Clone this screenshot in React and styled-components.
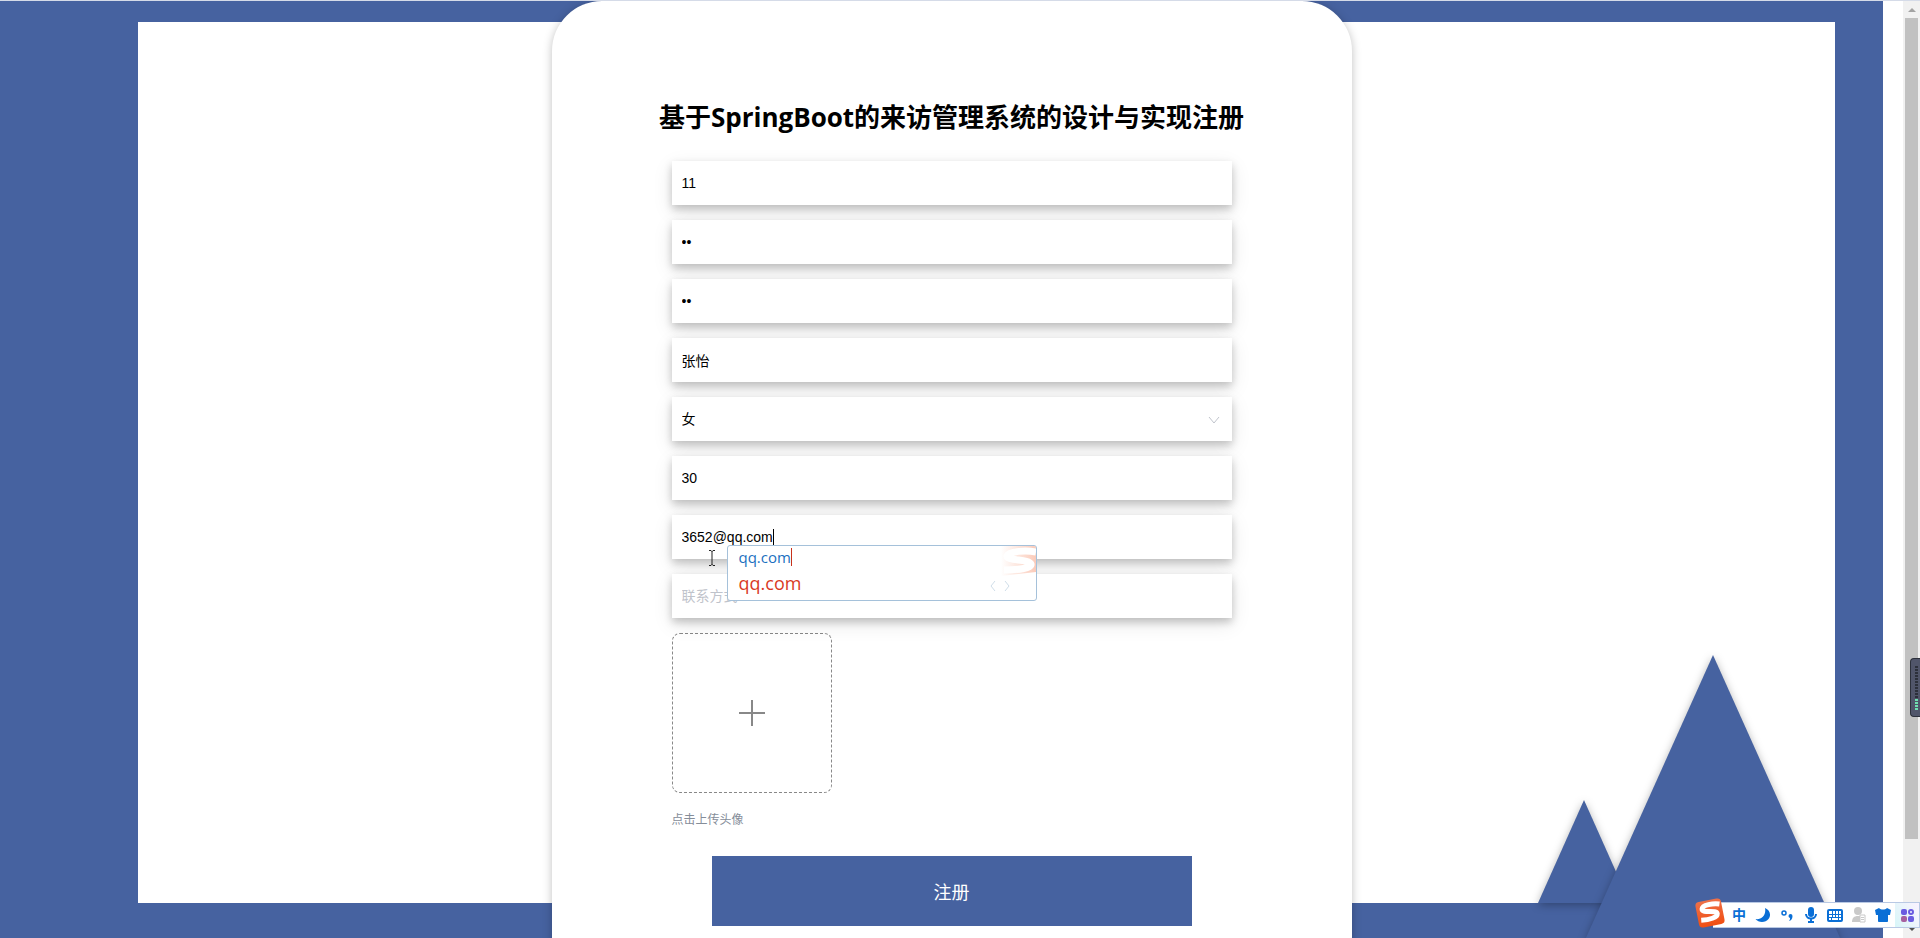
/* eslint-disable react/prop-types */
import React from 'react';
import styled, { createGlobalStyle } from 'styled-components';

const fields = [
  { name: 'account', label: '账号', value: '11' },
  { name: 'password', label: '密码', value: '11', type: 'password' },
  { name: 'confirm', label: '确认密码', value: '11', type: 'password' },
  { name: 'realname', label: '姓名', value: '张怡' },
  { name: 'gender', label: '性别', value: '女', options: ['女', '男'] },
  { name: 'age', label: '年龄', value: '30' },
  { name: 'email', label: '邮箱', value: '3652@qq.com', active: true },
  { name: 'phone', label: '联系方式', placeholder: '联系方式' },
];

const Mountains = () => (
  <MountainArt viewBox="0 0 302 283" aria-hidden="true">
    <polygon points="46,145 92,248 0,248" />
    <polygon points="175,0 303,285 47,285" />
  </MountainArt>
);

const SogouLogo = () => (
  <svg width="34" height="34" viewBox="0 0 34 34" aria-hidden="true">
    <defs>
      <linearGradient id="sogou" x1="0" y1="0" x2="0" y2="1">
        <stop offset="0" stopColor="#ee7048" />
        <stop offset="1" stopColor="#f04e12" />
      </linearGradient>
    </defs>
    <g transform="rotate(-11 17 17)">
      <rect x="4" y="4" width="26" height="26" rx="4" fill="url(#sogou)" />
      <path
        d="M28 10c-6-2-17-2.500-18 1.500-1 5 14 3 14 7.500-.5 4-9 4.500-17 3.500"
        fill="none"
        stroke="#fff"
        strokeWidth="5"
      />
    </g>
  </svg>
);

const Candidates = () => (
  <Popup>
    <Watermark viewBox="0 0 44 30" aria-hidden="true">
      <defs>
        <linearGradient id="fade" x1="0" y1="0" x2="1" y2="0">
          <stop offset="0" stopColor="#fff" />
          <stop offset="1" stopColor="#f9b9a2" />
        </linearGradient>
      </defs>
      <path d="M9 0H44V26L9 30z" fill="url(#fade)" opacity=".75" />
      <path
        d="M44 6c-10-2-27-1-29 4-1 5 22 3 24 8 1 4-12 6-27 6"
        fill="none"
        stroke="#fff"
        strokeWidth="7"
      />
    </Watermark>
    <Typed>qq.com</Typed>
    <Candidate>qq.com</Candidate>
    <Pager viewBox="0 0 20 12" aria-hidden="true">
      <path d="M5 1L1 6l4 5M15 1l4 5-4 5" />
    </Pager>
  </Popup>
);

const Field = ({ field }) => (
  <FieldBox>
    {field.options ? (
      <>
        <Select name={field.name} aria-label={field.label} defaultValue={field.value}>
          {field.options.map((option) => (
            <option key={option}>{option}</option>
          ))}
        </Select>
        <Chevron viewBox="0 0 12 8" aria-hidden="true">
          <path d="M1 1l5 6 5-6" />
        </Chevron>
      </>
    ) : (
      <Input
        name={field.name}
        type={field.type || 'text'}
        aria-label={field.label}
        placeholder={field.placeholder}
        defaultValue={field.value}
      />
    )}
    {field.active && (
      <>
        <Caret />
        <Pointer viewBox="0 0 8 18" aria-hidden="true">
          <path d="M1 1.500h2l1 1 1-1h2M4 2v14M1 16.500h2l1-1 1 1h2" />
        </Pointer>
        <Candidates />
      </>
    )}
  </FieldBox>
);

const InputBar = () => (
  <ImeBar>
    <SogouLogo />
    <ImeItem type="button" aria-label="中文">
      <b>中</b>
    </ImeItem>
    <ImeItem type="button" aria-label="半角">
      <svg width="16" height="16" viewBox="0 0 16 16">
        <path d="M10 1c5 2 6.500 7 3.500 11-3 4-10 4-13 0 6 1 11-4 9.500-11z" fill="#0a6fd6" />
      </svg>
    </ImeItem>
    <ImeItem type="button" aria-label="标点">
      <svg width="16" height="16" viewBox="0 0 16 16">
        <circle cx="5" cy="6" r="2" fill="none" stroke="#0a6fd6" strokeWidth="1.500" />
        <path d="M9.500 9a2 2 0 1 1 4 0c0 3-1.500 4.500-3.500 5 .8-1 1.200-2 1-3a2 2 0 0 1-1.500-2z" fill="#0a6fd6" />
      </svg>
    </ImeItem>
    <ImeItem type="button" aria-label="语音">
      <svg width="16" height="16" viewBox="0 0 16 16">
        <rect x="5" y="0" width="6" height="10" rx="3" fill="#0a6fd6" />
        <path d="M3 7c0 6 10 6 10 0M8 11v4M5 15h6" fill="none" stroke="#0a6fd6" strokeWidth="2" />
      </svg>
    </ImeItem>
    <ImeItem type="button" aria-label="键盘">
      <svg width="16" height="16" viewBox="0 0 16 16">
        <rect x="1" y="3" width="14" height="11" rx="1" fill="#fff" stroke="#0a6fd6" strokeWidth="2" />
        <path d="M5.500 4v6M8.500 4v6M11.500 4v6M2 7.500h12M2 10.500h12M4.500 10v3M11.500 10v3" stroke="#0a6fd6" />
      </svg>
    </ImeItem>
    <ImeItem type="button" aria-label="账户">
      <svg width="16" height="16" viewBox="0 0 16 16">
        <circle cx="7" cy="4" r="4" fill="#c9c9c9" />
        <path d="M1 15c0-4 2-6 6-6s7 2 7 6z" fill="#c9c9c9" />
        <path d="M9 8h5v7H9z" fill="#fff" stroke="#c9c9c9" />
        <path d="M10 10.500h3M10 12.500h3" stroke="#c9c9c9" />
      </svg>
    </ImeItem>
    <ImeItem type="button" aria-label="皮肤">
      <svg width="16" height="16" viewBox="0 0 16 16">
        <path d="M4 1c2 2 6 2 8 0l4 2-1 5h-2v6c0 1-1 1-1 1H4s-1 0-1-1V8H1L0 3z" fill="#0a6fd6" />
      </svg>
    </ImeItem>
    <ImeItem type="button" aria-label="工具箱" $tinted>
      <svg width="16" height="16" viewBox="0 0 16 16">
        <rect x="2" y="2" width="6" height="6" rx="2" fill="#6a5be0" />
        <circle cx="12" cy="5" r="2" fill="none" stroke="#6a5be0" strokeWidth="2" />
        <rect x="2" y="9" width="6" height="6" rx="2" fill="#a7609f" />
        <rect x="9" y="9" width="6" height="6" rx="2" fill="#6a5be0" />
      </svg>
    </ImeItem>
  </ImeBar>
);

const App = () => (
  <>
    <GlobalStyle />
    <Screen>
      <Page>
        <Scene>
          <Canvas />
          <Mountains />
        </Scene>
        <Card>
          <Title>基于SpringBoot的来访管理系统的设计与实现注册</Title>
          {fields.map((field) => (
            <Field key={field.name} field={field} />
          ))}
          <Upload type="button" aria-label="点击上传头像">
            <svg width="28" height="28" viewBox="0 0 28 28" aria-hidden="true">
              <path d="M14 1v26M1 14h26" stroke="#888" strokeWidth="2" />
            </svg>
          </Upload>
          <Hint>点击上传头像</Hint>
          <Submit type="button">注册</Submit>
        </Card>
      </Page>
      <Scrollbar>
        <Arrow viewBox="0 0 17 17" aria-hidden="true">
          <path d="M5 11l4-4 4 4z" fill="#a3a3a3" />
        </Arrow>
        <Thumb />
        <Rest />
        <Arrow viewBox="0 0 17 17" aria-hidden="true">
          <path d="M5 6l4 4 4-4z" fill="#505050" />
        </Arrow>
      </Scrollbar>
      <Meter>
        <Level />
        <Level $on />
      </Meter>
      <InputBar />
    </Screen>
  </>
);

export default App;

const GlobalStyle = createGlobalStyle`
  * {
    box-sizing: border-box;
  }

  body {
    margin: 0;
    overflow: hidden;
    background: #fff;
    font-family: "Liberation Sans", "Noto Sans CJK SC", sans-serif;
    font-size: 14px;
  }
`;

const Screen = styled.div`
  display: flex;
  position: relative;
  height: 100vh;
  overflow: hidden;
  border-top: 1px solid #d5dbe8;
`;

const Page = styled.main`
  flex: 1;
  display: grid;
  grid-template-columns: 1fr;
  grid-template-rows: 100%;
  overflow: hidden;
`;

const Scene = styled.div`
  grid-area: 1 / 1;
  position: relative;
  display: flex;
  margin-right: 20px;
  padding: 21px 48px 35px 138px;
  background: #4662a0;
  overflow: hidden;
`;

const Canvas = styled.div`
  flex: 1;
  background: #fff;
`;

const MountainArt = styled.svg`
  position: absolute;
  right: 43px;
  bottom: 0;
  width: 302px;
  height: 283px;
  overflow: visible;
  fill: #4662a0;

  polygon {
    filter: drop-shadow(0 2px 4px rgba(0, 0, 0, 0.3));
  }
`;

const Card = styled.form`
  grid-area: 1 / 1;
  justify-self: center;
  position: relative;
  display: flex;
  flex-direction: column;
  width: 800px;
  max-width: 100%;
  height: max-content;
  padding: 96px 120px 60px;
  border-radius: 50px;
  background: #fff;
  box-shadow: 0 2px 10px rgba(0, 0, 0, 0.25);
`;

const Title = styled.h1`
  align-self: center;
  margin: 0 0 24px;
  font-family: "Open Sans", "Noto Sans CJK SC", sans-serif;
  font-size: 26px;
  font-weight: 700;
  line-height: 40px;
  white-space: nowrap;
  color: #000;
`;

const FieldBox = styled.div`
  position: relative;
  height: 44px;
  margin-bottom: 15px;
  box-shadow: 0 4px 8px 0 rgba(0, 0, 0, 0.2), 0 6px 20px 0 rgba(0, 0, 0, 0.1);
`;

const Input = styled.input`
  display: block;
  width: 100%;
  height: 100%;
  padding: 0 10px;
  border: none;
  outline: none;
  background: #fff;
  color: #000;
  font: inherit;

  &::placeholder {
    color: #bfc3cb;
  }
`;

const Select = styled(Input).attrs({ as: 'select' })`
  appearance: none;
`;

const Chevron = styled.svg`
  position: absolute;
  top: 19px;
  right: 12px;
  width: 12px;
  height: 8px;
  fill: none;
  stroke: #c0c4cc;
  pointer-events: none;
`;

const Caret = styled.span`
  position: absolute;
  top: 14px;
  left: 101px;
  width: 1px;
  height: 16px;
  background: #000;
`;

const Pointer = styled.svg`
  position: absolute;
  top: 34px;
  left: 36px;
  z-index: 2;
  width: 8px;
  height: 18px;
  fill: none;
  stroke: #222;
`;

const Popup = styled.div`
  position: absolute;
  top: 30px;
  left: 55px;
  z-index: 2;
  display: flex;
  flex-direction: column;
  align-items: flex-start;
  width: 310px;
  height: 56px;
  padding: 0 11px;
  border: 1px solid #a5c1da;
  border-radius: 3px;
  background: #fff;
  overflow: hidden;
  font-family: "Open Sans", "Noto Sans CJK SC", sans-serif;
`;

const Typed = styled.span`
  margin-top: 2px;
  border-right: 1px solid #c8321c;
  font-size: 15px;
  line-height: 18px;
  color: #1b70c0;
`;

const Candidate = styled.span`
  margin-top: 6px;
  font-size: 18px;
  line-height: 22px;
  color: #d93a1f;
`;

const Watermark = styled.svg`
  position: absolute;
  top: 0;
  right: 0;
  width: 44px;
  height: 30px;
`;

const Pager = styled.svg`
  position: absolute;
  right: 26px;
  bottom: 8px;
  width: 20px;
  height: 12px;
  fill: none;
  stroke: #cfdde8;
`;

const Upload = styled.button`
  display: flex;
  align-items: center;
  justify-content: center;
  width: 160px;
  height: 160px;
  padding: 0;
  border: 1px dashed #888;
  border-radius: 8px;
  background: #fff;
  cursor: pointer;
`;

const Hint = styled.div`
  margin: 16px 0 25px;
  font-size: 12px;
  line-height: 22px;
  color: #858d99;
`;

const Submit = styled.button`
  align-self: center;
  width: 480px;
  height: 70px;
  border: none;
  background: #4662a0;
  color: #fff;
  font: inherit;
  font-size: 18px;
  cursor: pointer;
`;

const Scrollbar = styled.div`
  display: flex;
  flex-direction: column;
  width: 17px;
  background: #f1f1f1;
`;

const Arrow = styled.svg`
  width: 17px;
  height: 17px;
`;

const Thumb = styled.div`
  flex: 10;
  margin: 0 2px;
  background: #c1c1c1;
`;

const Rest = styled.div`
  flex: 1;
`;

const Meter = styled.div`
  position: absolute;
  top: 657px;
  right: 0;
  display: flex;
  flex-direction: column;
  gap: 1px;
  width: 10px;
  height: 59px;
  padding: 7px 2px 6px 4px;
  border: 1px solid #2c303b;
  border-right: none;
  border-radius: 4px 0 0 4px;
  background: #50556a;
`;

const Level = styled.div`
  flex: ${({ $on }) => ($on ? 12 : 34)};
  background: repeating-linear-gradient(
    ${({ $on }) => ($on ? '#6fe0b0' : '#2c303b')} 0 2px,
    #50556a 2px 3px
  );
`;

const ImeBar = styled.div`
  position: absolute;
  right: 0;
  bottom: 10px;
  display: flex;
  align-items: center;
  height: 26px;
  border: 1px solid #b9c9e4;
  border-left: none;
  background: #fff;

  > svg {
    margin: -4px 0 0 -20px;
  }
`;

const ImeItem = styled.button`
  display: flex;
  align-items: center;
  justify-content: center;
  width: 24px;
  height: 24px;
  padding: 0;
  border: none;
  background: ${({ $tinted }) => ($tinted ? 'linear-gradient(60deg, #d8f6f8, #fbf3ff)' : 'none')};
  color: #0a6fd6;
  font: inherit;
  line-height: 24px;
`;
